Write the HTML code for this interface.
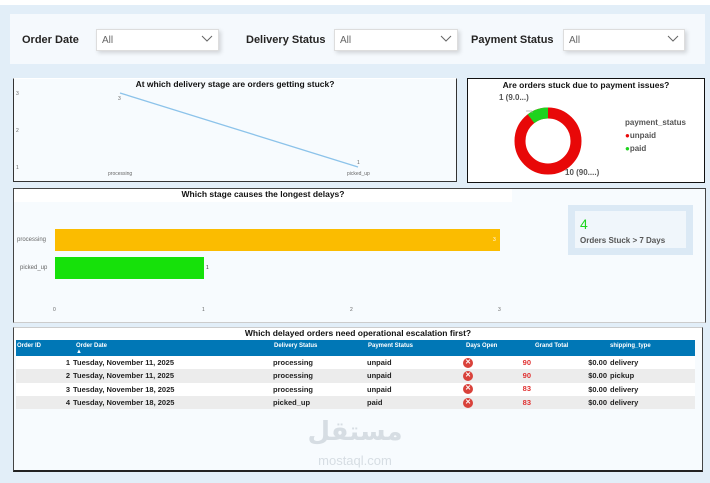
<!DOCTYPE html>
<html><head><meta charset="utf-8"><style>
*{margin:0;padding:0;box-sizing:border-box}
body{width:710px;height:483px;background:#e2eef8;font-family:"Liberation Sans",sans-serif;position:relative;overflow:hidden;color:#222}
.a{position:absolute}
.lbl{font-weight:bold;font-size:11px;color:#252423}
.dd{background:#fff;border:1px solid #ddd;box-shadow:2px 2px 4px rgba(0,0,0,.15);font-size:10px;color:#666;padding:5px 0 0 5px}
.dd svg{position:absolute;right:5px;top:5px}
.ttl{font-weight:bold;font-size:8.5px;text-align:center;color:#111}
.sm{font-size:5px;color:#666}
table{border-collapse:collapse;font-size:7.5px;font-weight:bold}
td{height:13.3px;white-space:nowrap}
.x{display:inline-block;width:10px;height:10px;border-radius:50%;background:#d9413a;color:#fff;font-size:7px;text-align:center;line-height:10px;vertical-align:middle}
</style></head><body>
<div class="a" style="left:0;top:0;width:710px;height:5px;background:#fff"></div>
<div class="a" style="left:10px;top:14px;width:695px;height:50px;background:#f5f9fd"></div>
<div class="a lbl" style="left:22px;top:34px">Order Date</div>
<div class="a dd" style="left:96px;top:29px;width:123px;height:22px">All<svg width="12" height="8"><path d="M1 1 L6 6 L11 1" stroke="#666" fill="none"/></svg></div>
<div class="a lbl" style="left:246px;top:34px">Delivery Status</div>
<div class="a dd" style="left:334px;top:29px;width:124px;height:22px">All<svg width="12" height="8"><path d="M1 1 L6 6 L11 1" stroke="#666" fill="none"/></svg></div>
<div class="a lbl" style="left:471px;top:34px">Payment Status</div>
<div class="a dd" style="left:563px;top:29px;width:122px;height:22px">All<svg width="12" height="8"><path d="M1 1 L6 6 L11 1" stroke="#666" fill="none"/></svg></div>

<div class="a" style="left:13px;top:78px;width:444px;height:104px;background:#f7fbfe;border:1px solid #333;border-top-color:#fff"></div>
<div class="a ttl" style="left:13px;top:79px;width:444px">At which delivery stage are orders getting stuck?</div>
<div class="a sm" style="left:16px;top:91px">3</div><div class="a sm" style="left:16px;top:128px">2</div><div class="a sm" style="left:16px;top:165px">1</div>
<div class="a sm" style="left:118px;top:96px">3</div><div class="a sm" style="left:357px;top:160px">1</div>
<div class="a sm" style="left:108px;top:171px">processing</div><div class="a sm" style="left:347px;top:171px">picked_up</div>
<svg class="a" style="left:0;top:0" width="460" height="190"><path d="M120 93 L358 167" stroke="#8cc3ea" stroke-width="1.3"/></svg>

<div class="a" style="left:467px;top:78px;width:238px;height:105px;background:#fff;border:1px solid #111"></div>
<div class="a ttl" style="left:467px;top:80px;width:238px">Are orders stuck due to payment issues?</div>
<svg class="a" style="left:508px;top:101px" width="80" height="80"><circle cx="40" cy="40" r="28" fill="none" stroke="#e80808" stroke-width="11"/><path d="M40 12 A28 28 0 0 0 23 17.7" fill="none" stroke="#1ed31e" stroke-width="11"/><path d="M24 12 L24 10 L18 10" stroke="#aaa" fill="none" stroke-width=".7"/></svg>
<div class="a" style="left:499px;top:93px;font-size:8px;font-weight:bold;color:#555">1 (9.0...)</div>
<div class="a" style="left:565px;top:168px;font-size:8px;font-weight:bold;color:#555">10 (90....)</div>
<div class="a" style="left:625px;top:116px;font-size:8px;font-weight:bold;color:#555;line-height:13px">payment_status<br><span style="color:#e80808">●</span>unpaid<br><span style="color:#1ed31e">●</span>paid</div>

<div class="a" style="left:13px;top:188px;width:693px;height:135px;background:#f7fbfe;border:1px solid #444;border-bottom-color:#ccc"></div>
<div class="a" style="left:14px;top:189px;width:498px;height:13px;background:#fff"></div>
<div class="a ttl" style="left:14px;top:189px;width:498px">Which stage causes the longest delays?</div>
<div class="a" style="left:55px;top:229px;width:445px;height:22px;background:#fbbc00"></div>
<div class="a" style="left:55px;top:257px;width:149px;height:22px;background:#16e10a"></div>
<div class="a sm" style="left:17px;top:237px;font-size:6px">processing</div>
<div class="a sm" style="left:20px;top:265px;font-size:6px">picked_up</div>
<div class="a sm" style="left:493px;top:237px;color:#fff">3</div>
<div class="a sm" style="left:206px;top:265px;color:#333">1</div>
<div class="a sm" style="left:53px;top:307px">0</div><div class="a sm" style="left:202px;top:307px">1</div><div class="a sm" style="left:350px;top:307px">2</div><div class="a sm" style="left:498px;top:307px">3</div>
<div class="a" style="left:568px;top:205px;width:125px;height:50px;background:#dbe9f5"></div>
<div class="a" style="left:575px;top:211px;width:111px;height:37px;background:#f0f6fb"></div>
<div class="a" style="left:580px;top:216px;font-size:14px;color:#1ed31e">4</div>
<div class="a" style="left:580px;top:236px;font-size:8px;font-weight:bold;color:#555">Orders Stuck &gt; 7 Days</div>

<div class="a" style="left:13px;top:327px;width:690px;height:145px;background:#f7fbfe;border:1px solid #444;border-top-color:#ccc;border-bottom:2px solid #222"></div>
<div class="a" style="left:14px;top:328px;width:688px;height:12px;background:#fff"></div>
<div class="a ttl" style="left:14px;top:328px;width:688px">Which delayed orders need operational escalation first?</div>
<div class="a" style="left:16px;top:340px;width:679px;height:16px;background:#0077b6;color:#fff;font-size:6px;font-weight:bold">
<span class="a" style="left:1px;top:3px">Order ID</span><span class="a" style="left:60px;top:3px">Order Date<br>▲</span><span class="a" style="left:258px;top:3px">Delivery Status</span><span class="a" style="left:352px;top:3px">Payment Status</span><span class="a" style="left:450px;top:3px">Days Open</span><span class="a" style="left:519px;top:3px">Grand Total</span><span class="a" style="left:594px;top:3px">shipping_type</span></div>
<table class="a" style="left:16px;top:356px;width:679px">
<tr style="background:#fff"><td style="width:57px;text-align:right;padding-right:3px">1</td><td style="width:198px">Tuesday, November 11, 2025</td><td style="width:94px;padding-left:2px">processing</td><td style="width:98px;padding-left:2px">unpaid</td><td style="width:70px"><span class="x">✕</span><span style="float:right;color:#e03030;padding-right:2px">90</span></td><td style="width:77px;text-align:right;padding-right:3px">$0.00</td><td>delivery</td></tr>
<tr style="background:#ececec"><td style="text-align:right;padding-right:3px">2</td><td>Tuesday, November 11, 2025</td><td style="padding-left:2px">processing</td><td style="padding-left:2px">unpaid</td><td><span class="x">✕</span><span style="float:right;color:#e03030;padding-right:2px">90</span></td><td style="text-align:right;padding-right:3px">$0.00</td><td>pickup</td></tr>
<tr style="background:#fff"><td style="text-align:right;padding-right:3px">3</td><td>Tuesday, November 18, 2025</td><td style="padding-left:2px">processing</td><td style="padding-left:2px">unpaid</td><td><span class="x">✕</span><span style="float:right;color:#e03030;padding-right:2px">83</span></td><td style="text-align:right;padding-right:3px">$0.00</td><td>delivery</td></tr>
<tr style="background:#ececec"><td style="text-align:right;padding-right:3px">4</td><td>Tuesday, November 18, 2025</td><td style="padding-left:2px">picked_up</td><td style="padding-left:2px">paid</td><td><span class="x">✕</span><span style="float:right;color:#e03030;padding-right:2px">83</span></td><td style="text-align:right;padding-right:3px">$0.00</td><td>delivery</td></tr>
</table>
<div class="a" style="left:300px;top:418px;width:110px;text-align:center;color:#d6dde3;font-family:'DejaVu Sans',sans-serif;font-weight:bold;font-size:26px;line-height:28px">مستقل</div>
<div class="a" style="left:300px;top:453px;width:110px;text-align:center;color:#d6dde3;font-size:13px">mostaql.com</div>
</body></html>
